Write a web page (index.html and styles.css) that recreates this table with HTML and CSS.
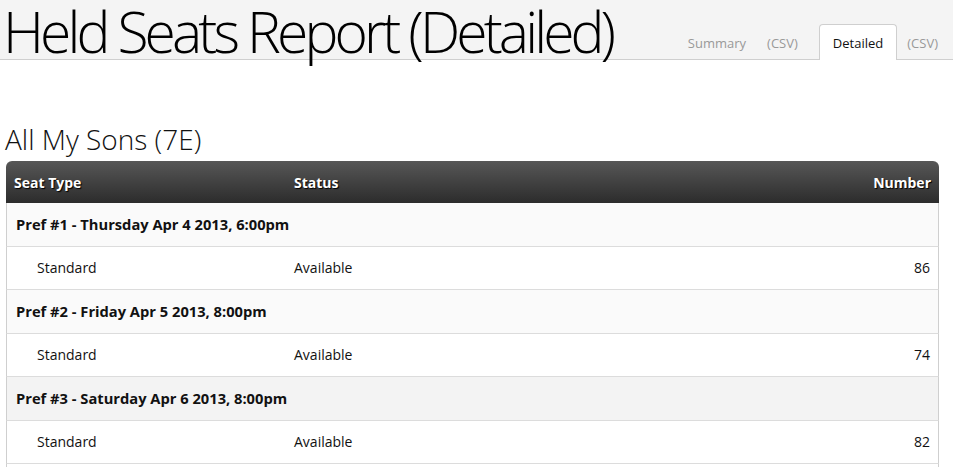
FILE: index.html
```html
<!DOCTYPE html>
<html>
<head>
<meta charset="utf-8">
<link rel="stylesheet" href="styles.css">
</head>
<body>
<header class="masthead">
  <h1 class="title">Held Seats Report (Detailed)</h1>
  <nav class="tabs">
    <a class="tab">Summary</a>
    <a class="csv csv-first">(CSV)</a>
    <a class="tab active">Detailed</a>
    <a class="csv">(CSV)</a>
  </nav>
</header>
<main class="content">
  <h2 class="show">All My Sons (7E)</h2>
  <table class="report">
    <thead>
      <tr><th class="c-type">Seat Type</th><th class="c-status">Status</th><th class="c-num">Number</th></tr>
    </thead>
    <tbody>
      <tr class="group"><td colspan="3">Pref #1 - Thursday Apr 4 2013, 6:00pm</td></tr>
      <tr class="item"><td class="indent">Standard</td><td>Available</td><td class="num">86</td></tr>
      <tr class="group"><td colspan="3">Pref #2 - Friday Apr 5 2013, 8:00pm</td></tr>
      <tr class="item"><td class="indent">Standard</td><td>Available</td><td class="num">74</td></tr>
      <tr class="group hover"><td colspan="3">Pref #3 - Saturday Apr 6 2013, 8:00pm</td></tr>
      <tr class="item"><td class="indent">Standard</td><td>Available</td><td class="num">82</td></tr>
      <tr class="spacer"><td colspan="3"></td></tr>
    </tbody>
  </table>
</main>
</body>
</html>
```
FILE: styles.css
```css
html, body {
  margin: 0;
  padding: 0;
  background: #fff;
  font-family: "Open Sans", "DejaVu Sans", sans-serif;
  color: #111;
  overflow: hidden;
}
.masthead {
  display: flex;
  align-items: flex-end;
  justify-content: space-between;
  height: 59px;
  background: #f4f4f4;
  border-bottom: 1px solid #cfcfcf;
  padding: 0 15px 0 3px;
}
.title {
  margin: 0;
  font-weight: 300;
  font-size: 57px;
  line-height: 66px;
  letter-spacing: -3.9px;
  color: #000;
  align-self: flex-start;
  margin-top: -2px;
  white-space: nowrap;
}
.tabs {
  display: flex;
  align-items: flex-end;
  margin-bottom: -1px;
  font-size: 13px;
}
.tabs a {
  display: block;
  height: 35px;
  line-height: 36px;
  color: #999;
}
.tab {
  padding: 0 13px;
  border: 1px solid transparent;
  border-bottom: none;
  border-radius: 4px 4px 0 0;
}
.tab.active {
  background: #fff;
  border-color: #cfcfcf;
  color: #111;
}
.csv {
  padding: 0 0 0 10px;
}
.csv-first {
  padding: 0 21px 0 7px;
}
.content {
  padding: 0 14px 0 6px;
}
.show {
  margin: 62px 0 5px -1px;
  font-weight: 300;
  font-size: 28px;
  line-height: 34px;
  color: #111;
}
.report {
  width: 100%;
  border-collapse: separate;
  border-spacing: 0;
  font-size: 14px;
}
.report th {
  height: 42px;
  padding: 0 8px;
  text-align: left;
  font-weight: 700;
  color: #fff;
  text-shadow: 1px 1px 1px #000;
  background: linear-gradient(#575757, #2c2c2c);
}
.report th.c-type { border-top-left-radius: 6px; width: 264px; }
.report th.c-status { padding-left: 8px; }
.report th.c-num { text-align: right; border-top-right-radius: 6px; }
.report td {
  height: 42.5px;
  padding: 0 8px;
  border-bottom: 1px solid #dcdcdc;
}
.report td:first-child { border-left: 1px solid #cfcfcf; }
.report td:last-child { border-right: 1px solid #cfcfcf; }
.group td {
  background: #fafafa;
  font-weight: 700;
  font-size: 14.7px;
  padding-left: 9px;
}
.group.hover td { background: #f3f3f3; }
.item td { background: #fff; }
.item td:nth-child(2) { padding-left: 8px; }
.indent { padding-left: 30px !important; }
.num { text-align: right; }
.spacer td { background: #fff; }
```
